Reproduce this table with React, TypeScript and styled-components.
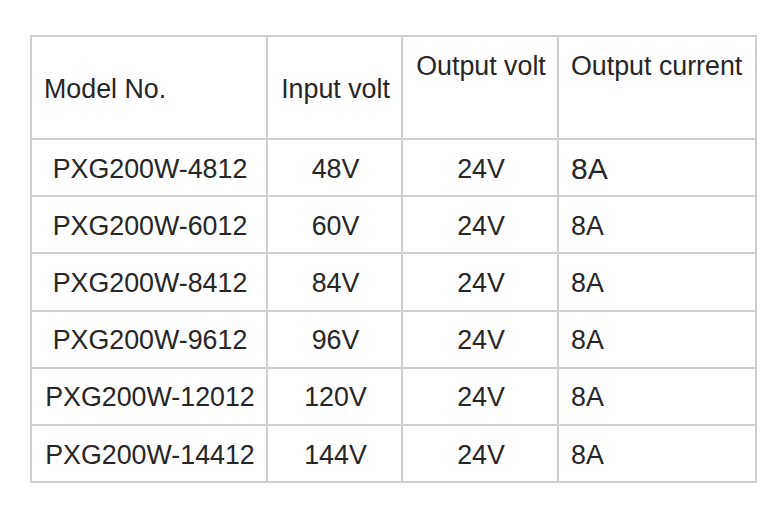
import React from "react";
import styled, { createGlobalStyle } from "styled-components";

const GlobalStyle = createGlobalStyle`
  html, body {
    margin: 0;
    padding: 0;
    background: #ffffff;
  }
  body {
    font-family: "Liberation Sans", Arial, sans-serif;
  }
`;

const Page = styled.div`
  width: 783px;
  height: 510px;
  padding: 35px 0 0 30px;
  box-sizing: border-box;
`;

const SpecTable = styled.table`
  border-collapse: collapse;
  table-layout: fixed;
  width: 727px;
  color: #262626;
  font-size: 26.8px;
`;

const HeadRow = styled.tr`
  height: 103px;
`;

const BodyRow = styled.tr`
  height: 57.2px;
`;

type Align = "left" | "center";

const Cell = styled.td<{ $align?: Align; $top?: boolean; $big?: boolean }>`
  border: 2px solid #cfcfcf;
  padding: ${(p) => (p.$top ? "14px 10px 0 12px" : "3px 10px 0 12px")};
  text-align: ${(p) => p.$align ?? "center"};
  vertical-align: ${(p) => (p.$top ? "top" : "middle")};
  white-space: nowrap;
  font-size: ${(p) => (p.$big ? "30px" : "inherit")};
  line-height: 1.15;
`;

const rows = [
  ["PXG200W-4812", "48V"],
  ["PXG200W-6012", "60V"],
  ["PXG200W-8412", "84V"],
  ["PXG200W-9612", "96V"],
  ["PXG200W-12012", "120V"],
  ["PXG200W-14412", "144V"],
];

export default function App() {
  return (
    <>
      <GlobalStyle />
      <Page>
        <SpecTable>
          <colgroup>
            <col style={{ width: 236 }} />
            <col style={{ width: 135 }} />
            <col style={{ width: 156 }} />
            <col style={{ width: 198 }} />
          </colgroup>
          <tbody>
            <HeadRow>
              <Cell $align="left">Model No.</Cell>
              <Cell>Input volt</Cell>
              <Cell $top>Output volt</Cell>
              <Cell $top $align="left">
                Output current
              </Cell>
            </HeadRow>
            {rows.map(([model, input], i) => (
              <BodyRow key={model}>
                <Cell>{model}</Cell>
                <Cell>{input}</Cell>
                <Cell>24V</Cell>
                <Cell $align="left" $big={i === 0}>
                  8A
                </Cell>
              </BodyRow>
            ))}
          </tbody>
        </SpecTable>
      </Page>
    </>
  );
}
